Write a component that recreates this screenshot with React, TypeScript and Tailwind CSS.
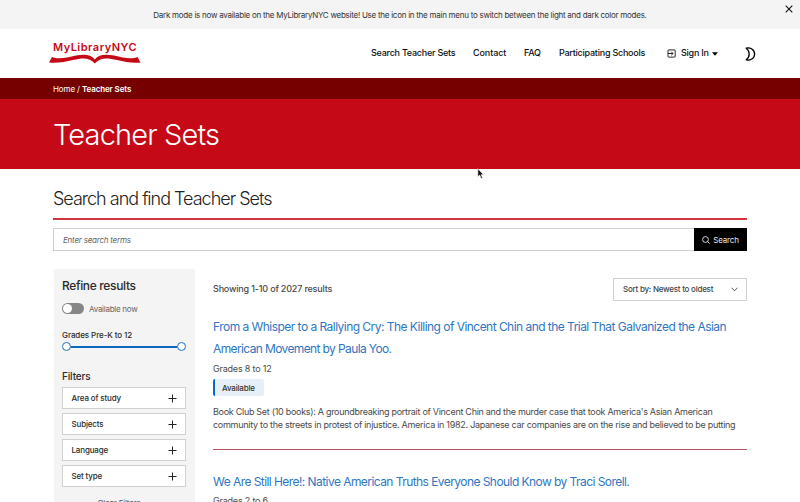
import React from "react";

const filters = ["Area of study", "Subjects", "Language", "Set type"];

function Plus() {
  return (
    <svg width="9" height="9" viewBox="0 0 9 9" fill="none" stroke="#222" strokeWidth="1">
      <path d="M4.5 0.5v8M0.5 4.5h8" />
    </svg>
  );
}

function Banner() {
  return (
    <div className="relative flex h-[29px] items-center justify-center bg-[#f4f4f4] text-[8px] leading-[12px] tracking-[-0.262px] text-[#333]">
      <p className="whitespace-nowrap">
        Dark mode is now available on the MyLibraryNYC website! Use the icon in the main menu to switch between the light and dark color modes.
      </p>
      <svg className="absolute top-[5px] right-[7px]" width="8" height="8" viewBox="0 0 8 8" stroke="#111" strokeWidth="1.1">
        <path d="M0.7 0.7l6.6 6.6M7.3 0.7L0.7 7.3" />
      </svg>
    </div>
  );
}

function Logo() {
  return (
    <div className="flex w-[92px] flex-col items-center text-[#c60917]">
      <span className="text-[11px] leading-[13px] font-semibold tracking-[0.5px] whitespace-nowrap">MyLibraryNYC</span>
      <svg width="92" height="10" viewBox="0 0 92 10" fill="currentColor">
        <path d="M3 3C9 5.600 18 3.600 27 1.500C36 -0.200 42 0.600 45.800 5.400C49.600 0.600 56 -0.200 65 1.500C74 3.600 83 5.600 88.500 3L91.500 8.400C84 9.200 76 8 68 6C58 3.600 51 3.200 45.800 9.600C40.600 3.200 34 3.600 24 6C16 8 8 9.200 0 8.400Z" />
      </svg>
    </div>
  );
}

function Header() {
  return (
    <header className="flex h-[49px] items-start bg-white pl-[49px]">
      <div className="pt-[12px]">
        <Logo />
      </div>
      <nav className="ml-[230px] flex h-[48px] items-center text-[9px] font-medium tracking-[-0.24px] whitespace-nowrap text-[#111]">
        <a className="w-[102px]">Search Teacher Sets</a>
        <a className="w-[51px] tracking-[-0.1px]">Contact</a>
        <a className="w-[35px]">FAQ</a>
        <a className="w-[108px]">Participating Schools</a>
        <svg className="mr-[5px]" width="9" height="9" viewBox="0 0 9 9" fill="none" stroke="#111" strokeWidth="0.9">
          <rect x="1" y="0.900" width="7.200" height="7.200" rx="0.500" />
          <path d="M1 4.500H6M4.200 2.700L6 4.500L4.200 6.300" />
        </svg>
        <a className="w-[31px]">Sign In</a>
        <svg className="mt-[2px]" width="6" height="4" viewBox="0 0 6 4">
          <path d="M0 0.300H6L3 3.700Z" />
        </svg>
        <svg className="mt-[2px] ml-[27px]" width="11" height="14" viewBox="0 0 11 14" fill="none" stroke="#000" strokeWidth="1.300" strokeLinejoin="round">
          <path d="M1.200 1.200C5 0.200 9.600 2.600 9.600 7C9.600 11.400 5 13.800 1.200 12.800C5.200 10 5.200 4 1.200 1.200Z" />
        </svg>
      </nav>
    </header>
  );
}

function Sidebar() {
  return (
    <aside className="h-[239px] w-[141px] shrink-0 bg-[#f4f4f4] px-2 pt-[9px] text-[#2b2b2b]">
      <h2 className="text-[12px] leading-[16px] font-medium tracking-[-0.35px]">Refine results</h2>
      <div className="mt-[9px] flex h-[11px] items-center gap-[5px]">
        <div className="flex h-[11px] w-[22px] items-center rounded-full bg-[#868686] pl-px">
          <div className="size-[9px] rounded-full bg-white" />
        </div>
        <span className="text-[8px] tracking-[-0.27px] text-[#666]">Available now</span>
      </div>
      <p className="mt-[15px] text-[8px] leading-[12px] font-medium tracking-[-0.08px]">Grades Pre-K to 12</p>
      <div className="flex h-[11px] w-[124px] items-center">
        <div className="size-[9px] rounded-full border border-[#1c6fbc] bg-white" />
        <div className="h-[2px] grow bg-[#0b68bd]" />
        <div className="size-[9px] rounded-full border border-[#1c6fbc] bg-white" />
      </div>
      <h3 className="mt-[17px] text-[10px] leading-[14px] font-medium tracking-[-0.15px]">Filters</h3>
      <div className="mt-[4px] flex flex-col gap-1">
        {filters.map((f) => (
          <button key={f} className="flex h-[22px] w-[124px] items-center justify-between border border-[#d0d0d0] bg-white pr-[8px] pl-[8.5px] text-[8px] font-medium tracking-[-0.16px]">
            {f}
            <Plus />
          </button>
        ))}
      </div>
      <p className="mt-[10px] pr-[11px] text-center text-[8px] leading-[12px] tracking-[-0.2px] text-[#555]">Clear Filters</p>
    </aside>
  );
}

function Results() {
  return (
    <section className="w-[534px] pt-[9px] text-[#4a4a4a]">
      <div className="flex h-[23px] items-center justify-between">
        <p className="pb-[2px] text-[9px] font-medium tracking-[-0.18px]">Showing 1-10 of 2027 results</p>
        <div className="flex h-[23px] w-[134px] items-center justify-between border border-[#d0d0d0] pr-[8px] pb-px pl-[9px] text-[8px] font-medium tracking-[-0.24px] text-[#444]">
          Sort by: Newest to oldest
          <svg width="7" height="5" viewBox="0 0 7 5" fill="none" stroke="#444" strokeWidth="0.900">
            <path d="M0.500 0.700L3.500 3.800L6.500 0.700" />
          </svg>
        </div>
      </div>
      <h3 className="mt-[15px] text-[12px] leading-[22px] tracking-[-0.535px] whitespace-nowrap text-[#2f76c2]">
        <span className="block">From a Whisper to a Rallying Cry: The Killing of Vincent Chin and the Trial That Galvanized the Asian</span>
        <span className="block tracking-[-0.62px]">American Movement by Paula Yoo.</span>
      </h3>
      <p className="mt-[2px] text-[9px] leading-[14px] tracking-[-0.2px]">Grades 8 to 12</p>
      <span className="mt-[3px] flex h-[17px] w-[51px] items-center rounded-[2px] border-l-2 border-[#0b68bd] bg-[#e6eff8] pl-[7px] text-[8px] font-medium tracking-[-0.18px] text-[#333]">Available</span>
      <p className="mt-[9px] text-[9px] leading-[13px] tracking-[-0.29px] whitespace-nowrap">
        <span className="block">Book Club Set (10 books): A groundbreaking portrait of Vincent Chin and the murder case that took America's Asian American</span>
        <span className="block tracking-[-0.277px]">community to the streets in protest of injustice. America in 1982. Japanese car companies are on the rise and believed to be putting</span>
      </p>
      <div className="mt-[18px] h-px bg-[#b4525e]" />
      <h3 className="mt-[21px] text-[12px] leading-[22px] tracking-[-0.56px] whitespace-nowrap text-[#2f76c2]">We Are Still Here!: Native American Truths Everyone Should Know by Traci Sorell.</h3>
      <p className="mt-px text-[9px] leading-[14px] tracking-[-0.2px]">Grades 2 to 6</p>
    </section>
  );
}

export default function App() {
  return (
    <div className="relative h-[502px] w-[800px] overflow-hidden bg-white font-['Inter','Liberation_Sans',sans-serif]">
      <Banner />
      <Header />
      <div className="flex h-[21px] items-center bg-[#760000] pl-[53px] text-[8px] tracking-[-0.12px] whitespace-pre text-white">
        <span>Home / </span>
        <b className="font-semibold">Teacher Sets</b>
      </div>
      <div className="flex h-[70px] items-center bg-[#c60917] pt-[2px] pl-[53px]">
        <h1 className="text-[29px] leading-[36px] font-light tracking-[-0.85px] text-white">Teacher Sets</h1>
      </div>
      <main className="px-[53px] pt-[18px]">
        <h2 className="text-[18px] leading-[24px] font-light tracking-[-1px] text-[#222]">Search and find Teacher Sets</h2>
        <div className="mt-[7px] h-[2px] bg-[#d2353e]" />
        <div className="mt-[8px] flex h-[23px] w-[694px]">
          <div className="flex grow items-center border border-r-0 border-[#cfcfcf] pl-[9px] text-[8px] tracking-[-0.22px] text-[#666] italic">Enter search terms</div>
          <button className="flex w-[53px] items-center justify-center gap-[3px] bg-black text-[8px] tracking-[-0.15px] text-[#e8e8e8]">
            <svg width="8" height="8" viewBox="0 0 8 8" fill="none" stroke="#eee" strokeWidth="0.900">
              <circle cx="3.500" cy="3.500" r="2.900" />
              <path d="M5.600 5.600L7.700 7.700" />
            </svg>
            Search
          </button>
        </div>
        <div className="mt-[18px] ml-px flex gap-[18px]">
          <Sidebar />
          <Results />
        </div>
      </main>
      <svg className="absolute top-[168px] left-[477px]" width="7" height="12" viewBox="0 0 7 12" fill="#111" stroke="#fff" strokeWidth="0.600">
        <path d="M0.800 0.800V8.800L2.700 7.100L4.100 10.500L5.500 9.900L4.100 6.700H6.600Z" />
      </svg>
    </div>
  );
}
